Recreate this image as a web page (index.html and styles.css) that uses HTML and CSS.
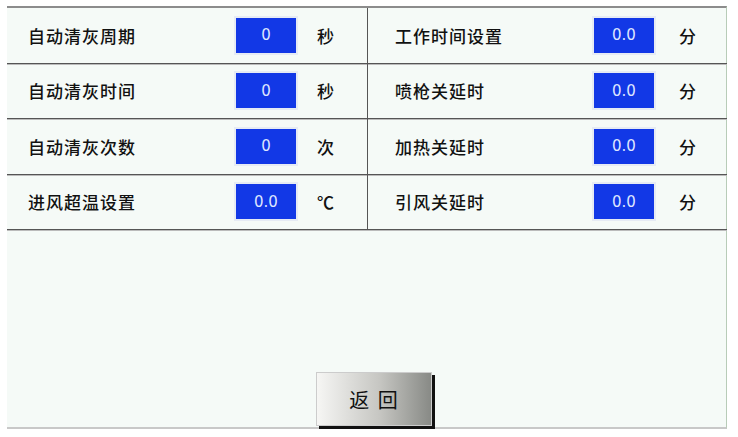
FILE: index.html
```html
<!DOCTYPE html>
<html lang="zh-CN">
<head>
    <meta charset="UTF-8">
    <title>参数设置</title>
    <link rel="stylesheet" href="styles.css">
</head>
<body>
    <div class="panel">
        <div class="grid">
            <div class="row">
                <span class="label">自动清灰周期</span>
                <span class="value">0</span>
                <span class="unit">秒</span>
            </div>
            <div class="row right">
                <span class="label">工作时间设置</span>
                <span class="value">0.0</span>
                <span class="unit">分</span>
            </div>
            <div class="row">
                <span class="label">自动清灰时间</span>
                <span class="value">0</span>
                <span class="unit">秒</span>
            </div>
            <div class="row right">
                <span class="label">喷枪关延时</span>
                <span class="value">0.0</span>
                <span class="unit">分</span>
            </div>
            <div class="row">
                <span class="label">自动清灰次数</span>
                <span class="value">0</span>
                <span class="unit">次</span>
            </div>
            <div class="row right">
                <span class="label">加热关延时</span>
                <span class="value">0.0</span>
                <span class="unit">分</span>
            </div>
            <div class="row">
                <span class="label">进风超温设置</span>
                <span class="value">0.0</span>
                <span class="unit">℃</span>
            </div>
            <div class="row right">
                <span class="label">引风关延时</span>
                <span class="value">0.0</span>
                <span class="unit">分</span>
            </div>
        </div>
        <div class="footer">
            <button class="back">返&nbsp;回</button>
        </div>
    </div>
</body>
</html>
```

FILE: styles.css
```css
body {
    margin: 0;
    padding: 6px 0 0 7px;
    background: #ffffff;
    font-family: "Noto Sans CJK SC", "Noto Sans", sans-serif;
    color: #111;
}

.panel {
    width: 720px;
    height: 423px;
    background: #f5faf7;
    border-top: 2px solid #8c8c8c;
    border-bottom: 2px solid #c8c8c8;
    border-right: 1px solid #b8ccb8;
    display: flex;
    flex-direction: column;
    box-sizing: border-box;
}

.grid {
    display: grid;
    grid-template-columns: 360px 360px;
}

.row {
    height: 55.5px;
    box-sizing: border-box;
    border-bottom: 1px solid #555;
    box-shadow: 0 1px 0 #bbb;
    display: flex;
    align-items: center;
    padding-left: 21px;
    font-size: 17px;
    font-weight: 500;
}

.row.right {
    border-left: 1px solid #555;
    padding-left: 27px;
}

.label {
    width: 208px;
    letter-spacing: 1px;
}

.right .label {
    width: 199px;
}

.value {
    width: 60px;
    height: 35px;
    background: #1238e6;
    outline: 2px solid #e6ebf4;
    color: #dfe6ff;
    font-family: "DejaVu Sans", sans-serif;
    font-weight: normal;
    font-size: 15px;
    display: flex;
    align-items: center;
    justify-content: center;
}

.unit {
    margin-left: 21px;
    font-size: 17px;
}

.right .unit {
    margin-left: 25px;
}

.footer {
    flex: 1;
    display: flex;
    justify-content: center;
    align-items: flex-end;
    padding-left: 14px;
}

.back {
    width: 116px;
    height: 54px;
    margin-bottom: 1px;
    border: 1px solid #ccc;
    background: linear-gradient(90deg, #f6f6f4, #c6c6c2 55%, #888a86);
    box-shadow: 3px 3px 0 #111;
    font-family: "Noto Sans CJK SC", sans-serif;
    font-size: 20px;
    letter-spacing: 2px;
    text-indent: 2px;
    color: #111;
    padding: 0;
}
```
